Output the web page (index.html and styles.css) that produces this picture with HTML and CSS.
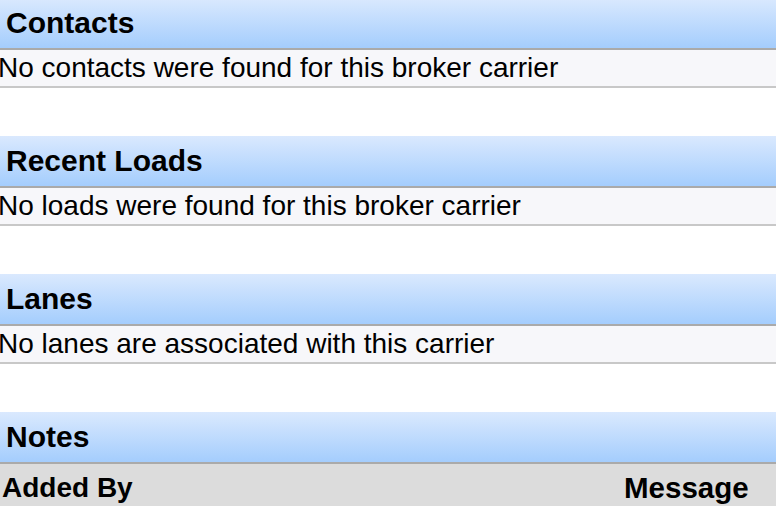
FILE: index.html
```html
<!DOCTYPE html>
<html lang="en">
<head>
    <meta charset="UTF-8">
    <title>Broker Carrier</title>
    <link rel="stylesheet" href="styles.css">
</head>
<body>

    <div class="page">
        <div class="section">
            <div class="section-title">Contacts</div>
            <div class="empty-row">No contacts were found for this broker carrier</div>
        </div>

        <div class="section">
            <div class="section-title">Recent Loads</div>
            <div class="empty-row">No loads were found for this broker carrier</div>
        </div>

        <div class="section">
            <div class="section-title">Lanes</div>
            <div class="empty-row">No lanes are associated with this carrier</div>
        </div>

        <div class="section">
            <div class="section-title">Notes</div>
            <div class="notes-head">
                <span class="col-added">Added By</span>
                <span class="col-message">Message</span>
            </div>
        </div>
    </div>

</body>
</html>
```

FILE: styles.css
```css
* {
    margin: 0;
    padding: 0;
    box-sizing: border-box;
}
body {
    background-color: white;
    font-family: "Liberation Sans", Arial, sans-serif;
    color: black;
    overflow: hidden;
}
.page {
    margin-top: -2px;
}
.section {
    margin-bottom: 48px;
}
.section-title {
    height: 52px;
    line-height: 50px;
    padding-left: 6px;
    font-size: 30px;
    font-weight: bold;
    background: linear-gradient(to bottom, #dae9fe, #a4cdfd);
    border-bottom: 2px solid #aaaaaa;
}
.empty-row {
    height: 38px;
    line-height: 36px;
    font-size: 28px;
    text-indent: -2px;
    white-space: nowrap;
    background: #f7f7fa;
    border-bottom: 2px solid #c8c8c8;
}
.notes-head {
    display: grid;
    grid-template-columns: 622px 1fr;
    height: 48px;
    line-height: 48px;
    padding-left: 2px;
    font-size: 28px;
    font-weight: bold;
    background: #dcdcdc;
}
.col-message {
    font-size: 29.5px;
}
```
